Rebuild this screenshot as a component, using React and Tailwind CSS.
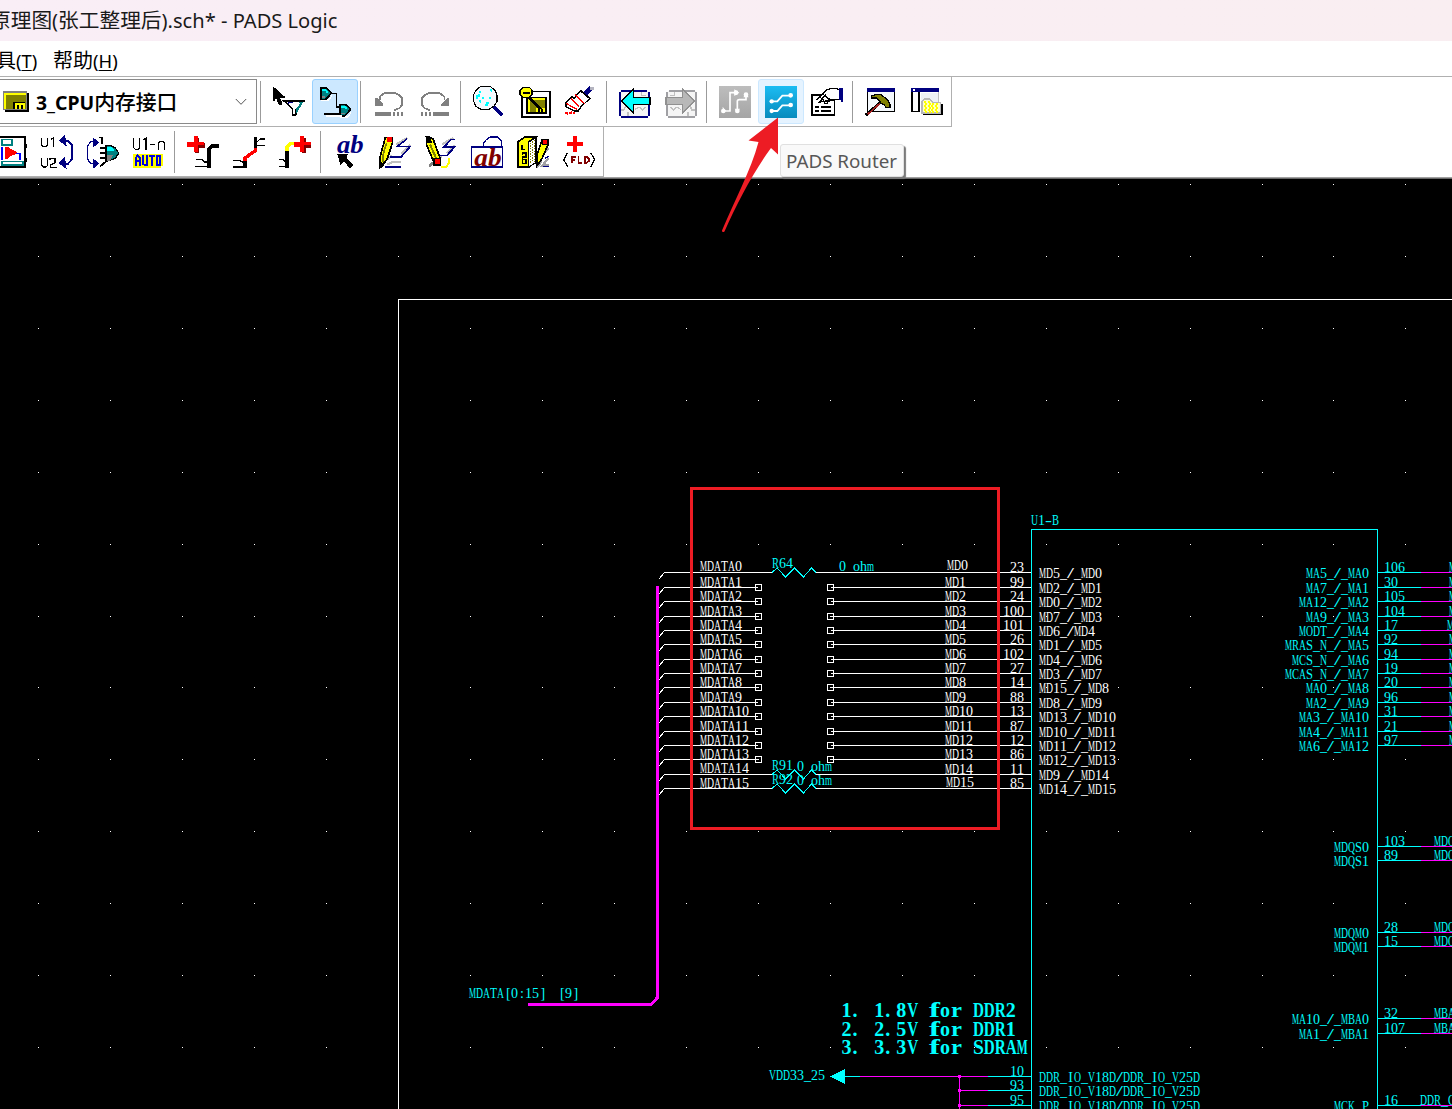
import React from "react";

const CYAN = "#00ffff";
const MAGENTA = "#ff00ff";
const NAVY = "#000080";

/* ---------- toolbar parts ---------- */

function Button({ box, tone = "border-transparent", children }) {
  return (
    <div className={"relative h-[45px] w-[46px] shrink-0 rounded-[3px] border " + tone}>
      <svg className="absolute -left-px -top-px h-[45px] w-[46px]" viewBox={box} shapeRendering="crispEdges" fill="none">
        {children}
      </svg>
    </div>
  );
}

function Separator() {
  return <div className="ml-[2px] mr-[5px] h-[42px] w-px shrink-0 bg-[#9b9b9b]" />;
}

function Letters({ x, y, w, size, fill, children }) {
  return (
    <text x={x} y={y} fontSize={size} fill={fill} textLength={w} lengthAdjust="spacingAndGlyphs" fontFamily="Liberation Serif, serif" fontStyle="italic" fontWeight={700}>
      {children}
    </text>
  );
}

function FilterIcon() {
  return (
    <Button box="18 9 138 135">
      <path d="M39 31V76H45V70H51V76L57 86H66V76L60 66H75V61L69 60L45 36Z" fill="#000" />
      <path d="M72 75H132L108 98V115H98V98Z" fill="#fff" stroke="#000" strokeWidth="4" />
      <path d="M108 98V115L132 75H120Z" fill="#008080" />
      <path d="M84 78h15v5h-15z" fill={NAVY} />
      <path d="M84 83L101 98H109L122 80H102Z" fill="#fff" />
      <path d="M69 74H135M97 97V118H109" stroke="#000" strokeWidth="5" />
    </Button>
  );
}

function Gate({ x, y }) {
  return (
    <g transform={`translate(${x} ${y})`}>
      <path d="M3 36H27L36 20V28L26 42H3Z" fill="#fff" />
      <path d="M2 2H18L26 8L33 17L26 27L17 36H2Z" fill="#008080" stroke="#000" strokeWidth="5" />
      <path d="M6 6H17L24 13V17H18V12H6Z" fill={CYAN} />
      <path d="M6 29H16" stroke="#808080" strokeWidth="5" />
    </g>
  );
}

function GatesIcon() {
  return (
    <Button box="156 9 138 135" tone="bg-[#cce8ff] border-[#99d1ff]">
      <Gate x={180} y={34} />
      <Gate x={238} y={83} />
      <path d="M214 52H229V92H238M192 114H242" stroke="#000" strokeWidth="5" />
      <path d="M198 120H245" stroke="#fff" strokeWidth="5" />
    </Button>
  );
}

function Undo({ flip }) {
  return (
    <Button box={flip ? "456 9 138 135" : "318 9 138 135"}>
      <g transform={flip ? "translate(912 0) scale(-1 1)" : undefined} fill="#808080">
        <path d="M345 66H351L360 75L369 84V90H345Z" />
        <path d="M359 72V63L369 54L378 50H402L417 57L426 66V87L417 97L402 103" fill="none" stroke="#808080" strokeWidth="5" />
        <path d="M345 108h48v12h-48zM399 108h5v12h-5zM411 108h5v12h-5zM423 108h6v12h-6z" />
      </g>
    </Button>
  );
}

function ZoomIcon() {
  return (
    <Button box="618 9 138 135">
      <path d="M663 31H690L705 43L711 57V76L702 90L687 100H663L648 91L641 76V56L649 41Z" fill="#f5fafe" stroke="#000" strokeWidth="3.5" />
      <path d="M651 68V60H656V55M659 50V46H663M689 42H694V48M668 62V68M674 86H680V80H686M690 70V64M656 74H661V80" stroke={CYAN} strokeWidth="5" />
      <path d="M702 93L727 117" stroke={NAVY} strokeWidth="10" />
    </Button>
  );
}

function BoardIcon() {
  return (
    <Button box="756 9 138 135">
      <path d="M786 46H870V122H786Z" fill="#fff" stroke="#000" strokeWidth="5" />
      <path d="M798 62H861V113H798Z" fill="#000" />
      <path d="M803 67H855V107H803Z" fill="#ffff00" />
      <path d="M809 72H855V107H809Z" fill="#808000" />
      <path d="M829 95h26v12h-26z" fill="#ffff00" />
      <path d="M834 99h5v8h-5zM844 99h5v8h-5z" fill="#000" />
      <path d="M806 62L842 100" stroke="#000" strokeWidth="9" />
      <path d="M791 34H808L816 42V57L807 65H790L780 56V42Z" fill="#ffff00" stroke="#000" strokeWidth="4" />
      <path d="M788 50H809" stroke="#000" strokeWidth="5" />
    </Button>
  );
}

function BrushIcon() {
  return (
    <Button box="894 9 138 135">
      <path d="M918 79L935 62L942 67L962 44L990 67L963 92L955 105H942L918 93Z" fill="#fff" stroke="#000" strokeWidth="4" />
      <path d="M934 67L957 92M946 56L974 83M918 82L952 101" stroke="#ff0000" strokeWidth="4" />
      <path d="M916 111H923V117M928 111H935V104M938 111H944" stroke="#ff0000" strokeWidth="4" />
      <path d="M972 57L993 36" stroke={NAVY} strokeWidth="15" />
      <path d="M990 33h12v10h-12z" fill="#b4b4c0" />
      <path d="M963 45L989 67" stroke="#000" strokeWidth="5" />
    </Button>
  );
}

function SheetArrow({ next }) {
  const frame = next ? "#a0a0a4" : NAVY;
  return (
    <Button box={next ? "174 9 138 135" : "36 9 138 135"}>
      <g transform={next ? "translate(348 0) scale(-1 1)" : undefined}>
        <path d="M60 44H145V123H60Z" fill="#f5f5f5" />
        <path d="M63 44H142M60 48V120M146 48V120M63 124H144" stroke={frame} strokeWidth="6" />
        <path d="M64 102H72L78 90M84 120V108M106 100L118 94L128 102L139 92M124 49V58H138" stroke="#c0c0c0" strokeWidth="4" />
        <path d="M65 75L101 39V64H150V86H101V111Z" fill={next ? "#b8b8b8" : CYAN} stroke={next ? "#909090" : "#000"} strokeWidth="4" />
      </g>
    </Button>
  );
}

function LayoutIcon() {
  return (
    <Button box="336 9 138 135">
      <defs>
        <linearGradient id="grayTile" x1="0" y1="0" x2="0" y2="1"><stop offset="0" stopColor="#bdbdbd" /><stop offset="1" stopColor="#a5a5a5" /></linearGradient>
      </defs>
      <rect x="357" y="30" width="96" height="96" rx="4" fill="url(#grayTile)" />
      <g shapeRendering="auto" stroke="#fff" strokeWidth="5">
        <path d="M370 105H390V50H408M412 105V76Q412 71 418 71H438V56" />
        <path d="M403 40V60L418 50ZM430 64H446L438 50ZM368 92V108L378 105ZM404 98H420L412 111Z" fill="#fff" stroke="none" />
        <circle cx="370" cy="105" r="7" fill="#fff" stroke="none" />
        <circle cx="408" cy="50" r="7" fill="#fff" stroke="none" />
        <circle cx="438" cy="56" r="7" fill="#fff" stroke="none" />
        <circle cx="412" cy="105" r="7" fill="#fff" stroke="none" />
      </g>
    </Button>
  );
}

function RouterIcon() {
  return (
    <Button box="474 9 138 135" tone="bg-[#e5f3ff] border-[#cce8ff]">
      <defs>
        <linearGradient id="blueTile" x1="0" y1="0" x2="0" y2="1"><stop offset="0" stopColor="#1cbcf2" /><stop offset="1" stopColor="#078bbd" /></linearGradient>
      </defs>
      <rect x="495" y="30" width="96" height="96" rx="3" fill="url(#blueTile)" />
      <g shapeRendering="auto" stroke="#fff" strokeWidth="5.5">
        <path d="M514 76H532L547 59H572M514 105H532L547 88H572" />
        <g fill="#fff" stroke="none">
          <circle cx="515" cy="76" r="6.5" /><circle cx="572" cy="58" r="7" /><circle cx="515" cy="105" r="6.5" /><circle cx="572" cy="87" r="7" />
        </g>
      </g>
    </Button>
  );
}

function PropertiesIcon() {
  return (
    <Button box="612 9 138 135">
      <path d="M635 56H703V117H635Z" fill="#fff" stroke="#000" strokeWidth="5" />
      <path d="M645 92H656M664 92H693M645 104H656M664 104H693" stroke="#000" strokeWidth="5" />
      <path d="M650 72L678 43L690 38H718V69H690L681 82H675L668 69L658 78Z" fill="#fff" />
      <path d="M650 72L678 43L690 38H712L720 44M716 70H690L681 82H675L668 69L658 78Z" stroke="#000" strokeWidth="4" />
      <path d="M660 62L672 76M668 52L690 76M676 60L690 70M664 70L678 56" stroke="#000" strokeWidth="3" />
      <path d="M717 36h12v42h-6v-6h-6z" fill={NAVY} />
    </Button>
  );
}

function HammerIcon() {
  return (
    <Button box="774 9 138 135">
      <path d="M803 39H884V106H803Z" fill="#f4f8fc" stroke="#000" strokeWidth="4" />
      <path d="M801 36h84v12h-84z" fill={NAVY} />
      <path d="M815 60L827 56H843L861 70L870 84V94H858L852 86L843 81L831 66H815Z" fill="#808000" stroke="#000" strokeWidth="4" />
      <path d="M797 118L842 79" stroke="#000" strokeWidth="9" />
      <path d="M803 115L839 83" stroke="#a02020" strokeWidth="5" />
    </Button>
  );
}

function ProjectIcon() {
  return (
    <Button box="912 9 138 135">
      <path d="M935 39H957V106H935Z" fill="#fff" stroke="#000" strokeWidth="5" />
      <path d="M962 50H1015V90H962Z" fill="#eef1f6" />
      <path d="M1015 48V84" stroke="#c0c0c0" strokeWidth="4" />
      <path d="M933 36h84v12h-84z" fill={NAVY} />
      <path d="M939 40h5v5h-5z" fill="#fff" />
      <path d="M969 118H1028V84H1022V112H969Z" fill="#000" />
      <path d="M966 76L973 69H990L998 80H1022V111H966Z" fill="#ffffc8" stroke="#b8b8b8" strokeWidth="4" />
      <path d="M972 78H990M975 84H1018M972 90H1018M975 96H1018M972 102H1018M975 107H1018" stroke="#ffff00" strokeWidth="5" strokeDasharray="6 5" />
    </Button>
  );
}

function Dropdown() {
  return (
    <div className="flex h-[45px] w-[257px] shrink-0 items-center border border-l-0 border-[#8a8a8a] bg-white">
      <svg className="ml-[3px] h-[22px] w-[26px] shrink-0" viewBox="9 276 78 66" shapeRendering="crispEdges">
        <path d="M15 282h72v57H15z" fill="#000" />
        <path d="M9 276h72v57H9z" fill="#808080" />
        <path d="M12 282h66v48H12z" fill="#ffff00" />
        <path d="M18 288h60v42H18z" fill="#808000" />
        <path d="M39 308h36v22H39z" fill="#000" />
        <path d="M45 312h30v18H45z" fill="#ffff00" />
        <path d="M51 318h5v12h-5zM63 318h5v12h-5z" fill="#000" />
      </svg>
      <span className="ml-[7px] whitespace-nowrap pt-[2px] font-['Noto_Sans','Noto_Sans_CJK_SC',sans-serif] text-[19.4px] font-bold leading-none">
        3_CPU<span className="text-[20.8px] font-medium">内存接口</span>
      </span>
      <svg className="ml-auto mr-[9px] h-[8px] w-[12px]" viewBox="0 0 12 8" fill="none" stroke="#555">
        <path d="M.8 1L6 6.3L11.2 1" />
      </svg>
    </div>
  );
}

/* ---------- second toolbar icons ---------- */

function PartIcon() {
  return (
    <Button box="-36 15 138 135">
      <path d="M-20 38H74V128H-20Z" fill="#fff" stroke="#000" strokeWidth="6" />
      <path d="M76 61h5v11h-5zM76 102h5v12h-5z" fill="#000" />
      <path d="M5 46H36V62H5Z" stroke="#008080" strokeWidth="5" />
      <path d="M5 112H68V122H5Z" stroke="#008080" strokeWidth="5" />
      <path d="M5 68V108M48 88H60V108" stroke="#0000ff" strokeWidth="5" />
      <path d="M16 68H24L30 75L42 79L52 86L42 93L30 97L24 104H16Z" fill="#ff0000" />
    </Button>
  );
}

function SwapRefIcon() {
  return (
    <Button box="102 15 138 135">
      <path d="M125 42V63L130 68H138L143 63V42M152 46L160 42V70M125 103V124L130 129H138L143 124V103M150 108V103H165V116L151 124V130H170" stroke="#000" strokeWidth="4" />
      <path d="M196 50H204L216 63V106L204 119H196" stroke={NAVY} strokeWidth="6" />
      <path d="M178 50L194 36L198 64ZM178 117L194 102L198 132Z" fill={NAVY} stroke={NAVY} strokeWidth="3" />
    </Button>
  );
}

function SwapPinIcon() {
  return (
    <Button box="240 15 138 135">
      <path d="M280 53H272L263 66V105L272 119H280" stroke={NAVY} strokeWidth="4" />
      <path d="M296 56L280 43V68ZM296 119L280 106V132Z" fill={NAVY} stroke={NAVY} strokeWidth="3" />
      <path d="M298 40H305V60M300 72H318M300 86H318M300 101H318M301 127L318 112" stroke="#000" strokeWidth="5" />
      <path d="M318 65H333L346 72L356 87L346 103L318 112Z" fill="#008080" stroke="#000" strokeWidth="4" />
      <path d="M321 68H335L345 82H321Z" fill={CYAN} />
      <path d="M321 94H338L330 110H321Z" fill="#808080" />
    </Button>
  );
}

function AutoIcon() {
  return (
    <Button box="378 15 138 135">
      <path d="M401 42V71L406 76H414L419 71V42M430 48L438 42V77M449 61H465M475 77V55M475 58L480 52H488L493 58V77" stroke="#000" strokeWidth="4" />
      <path d="M400 90h90v36h-6v6h-84z" fill="#ffff00" />
      <path d="M407 127V103L413 94L420 103V127M407 112H421M430 94V120L435 124H442V94M448 95H464M456 95V127M470 96H481V124H470Z" stroke="#0000e0" strokeWidth="6" />
    </Button>
  );
}

function RedPlus({ x, y }) {
  return (
    <g transform={`translate(${x} ${y})`}>
      <path d="M24 4h12v15h16v16h-16v14h-12z" fill="#800000" />
      <path d="M19 0h12v17h20v10h-20v19h-12v-15h-19v-14h19z" fill="#ff0000" />
    </g>
  );
}

function AddNetIcon() {
  return (
    <Button box="540 15 138 135">
      <RedPlus x={562} y={37} />
      <path d="M656 66H636L627 76V131" stroke="#000" strokeWidth="10" />
      <path d="M587 106H606L613 114H622M584 128H624" stroke="#000" strokeWidth="4" />
    </Button>
  );
}

function AddLinkIcon() {
  return (
    <Button box="678 15 138 135">
      <path d="M766 38V72M735 108V131" stroke="#000" strokeWidth="11" />
      <path d="M766 72V80L735 102V110" stroke="#ff0000" strokeWidth="10" />
      <path d="M771 54L780 45H795M771 64H795M700 110H720L733 118M699 129H733" stroke="#000" strokeWidth="4" />
    </Button>
  );
}

function AddBusIcon() {
  return (
    <Button box="816 15 138 135">
      <path d="M861 82V131" stroke="#000" strokeWidth="11" />
      <path d="M861 82V69L870 59H888" stroke="#ffff00" strokeWidth="10" />
      <RedPlus x={881} y={37} />
      <path d="M838 106H849L857 114M837 128H857" stroke="#000" strokeWidth="4" />
    </Button>
  );
}

function TextCursorIcon() {
  return (
    <Button box="198 159 138 135">
      <Letters x={231} y={232} w={80} size={74} fill={NAVY}>ab</Letters>
      <path d="M232 234H264L259 246L279 267L270 277L252 257L241 266Z" fill="#000" />
    </Button>
  );
}

function PencilIcon() {
  return (
    <Button box="336 159 138 135">
      <path d="M443 186L408 205M451 207L425 234M382 252L396 238M382 266L396 258H424" stroke="#c0c0c0" strokeWidth="7" />
      <path d="M441 189L412 211H451L424 242H391M422 272H376" stroke={NAVY} strokeWidth="5" />
      <path d="M376 184H397V202L381 251L360 274V244Z" fill="#ffff00" stroke="#000" strokeWidth="5" />
      <path d="M380 200L368 240V258" stroke="#808000" strokeWidth="5" />
      <path d="M382 183h15v15h-15z" fill="#ff0000" />
      <path d="M359 255v20h8l7-8z" fill="#000" />
    </Button>
  );
}

function EraseIcon() {
  return (
    <Button box="474 159 138 135">
      <path d="M580 186L546 205M584 207L560 232M545 242H531" stroke="#c0c0c0" strokeWidth="7" />
      <path d="M584 190H574L552 213H584L561 238H540" stroke={NAVY} strokeWidth="5" />
      <path d="M508 271L524 256" stroke="#808080" strokeWidth="8" />
      <path d="M499 182L519 188L540 246L521 256L500 208Z" fill="#ffff00" stroke="#000" strokeWidth="5" />
      <path d="M510 205L529 248" stroke="#808000" strokeWidth="6" />
      <path d="M498 180h11l8 20h-19z" fill="#000" />
      <path d="M522 248h20v19h-20z" fill="#ff0000" stroke="#000" strokeWidth="4" />
      <path d="M544 273H558L566 262V247" stroke="#ffff00" strokeWidth="6" />
    </Button>
  );
}

function BagIcon() {
  return (
    <Button box="612 159 138 135">
      <path d="M635 213H728V273H635Z" fill="#fff" stroke={NAVY} strokeWidth="4" />
      <path d="M670 211V201L680 190L692 183H712L724 194V211" stroke={NAVY} strokeWidth="4" />
      <Letters x={643} y={271} w={82} size={74} fill="#800000">ab</Letters>
    </Button>
  );
}

function LibraryIcon() {
  return (
    <Button box="750 159 138 135">
      <path d="M774 197L797 182H828L806 198V273H774Z" fill="#ffff00" stroke="#000" strokeWidth="5" />
      <path d="M806 198L828 183V260L806 273Z" fill="#fff" stroke="#000" strokeWidth="4" />
      <path d="M812 200V265M818 196V262M824 192V258" stroke="#808000" strokeWidth="3" strokeDasharray="4 4" />
      <path d="M786 207V220H795M787 238V231H798V243H787V262M787 250H798V262H787" stroke="#000" strokeWidth="4" />
      <path d="M866 218L842 242V260L830 273M866 245L848 268H866" stroke="#a0a0a4" strokeWidth="7" />
      <path d="M866 240L855 248M850 272H866" stroke={NAVY} strokeWidth="4" />
      <path d="M846 191H863V209L845 250L830 270V240Z" fill="#ffff00" stroke="#000" strokeWidth="5" />
      <path d="M848 190h15v15h-15z" fill="#ff0000" stroke="#000" strokeWidth="3" />
    </Button>
  );
}

function FieldIcon() {
  return (
    <Button box="888 159 138 135">
      <path d="M939 180h12v18h18v12h-18v18h-12v-18h-18v-12h18z" fill="#ff0000" />
      <path d="M923 230L911 251L923 272M992 230L1004 251L992 272" stroke="#000" strokeWidth="4" />
      <path d="M935 262V243H948M935 251H945M955 241V260H967M974 243H981L987 249V255L981 260H974Z" stroke="#800000" strokeWidth="5" />
    </Button>
  );
}

/* ---------- schematic ---------- */

// Glyphs kept at their natural width inside a fixed-pitch cell: [width in em, offset in cell].
const THIN = {
  ".": [0.25, 0], ":": [0.278, 0.3], "[": [0.333, 0.3], "]": [0.333, 0.2], " ": [0.25, 0], I: [0.333, 0.17],
};
const NATURAL = /[0-9_ohm]/;

function Label({ x, y, children, fill = "#fff", end = false, pitch = 7, size = 14, bold = false }) {
  const chars = [...children];
  const left = end ? x - chars.length * pitch : x;
  return (
    <text y={y} fontSize={size} fill={fill} fontWeight={bold ? 700 : 400} fontFamily="Liberation Serif, serif" style={{ whiteSpace: "pre" }}>
      {chars.map((c, i) => {
        const thin = THIN[c];
        const at = left + i * pitch + (thin ? pitch * thin[1] : 0);
        const natural = thin || (c !== "m" && NATURAL.test(c));
        return natural ? (
          <tspan key={i} x={at}>{c}</tspan>
        ) : (
          <tspan key={i} x={at} textLength={pitch} lengthAdjust="spacingAndGlyphs">{c}</tspan>
        );
      })}
    </text>
  );
}

const ROWS = [572, 587, 601, 616, 630, 644, 659, 673, 687, 702, 716, 731, 745, 759, 774, 788];
const LEFT_PINS = [
  ["23", "MD5_/_MD0"], ["99", "MD2_/_MD1"], ["24", "MD0_/_MD2"], ["100", "MD7_/_MD3"],
  ["101", "MD6_/MD4"], ["26", "MD1_/_MD5"], ["102", "MD4_/_MD6"], ["27", "MD3_/_MD7"],
  ["14", "MD15_/_MD8"], ["88", "MD8_/_MD9"], ["13", "MD13_/_MD10"], ["87", "MD10_/_MD11"],
  ["12", "MD11_/_MD12"], ["86", "MD12_/_MD13"], ["11", "MD9_/_MD14"], ["85", "MD14_/_MD15"],
];
const RIGHT_PINS = [
  [572, "106", "MA5_/_MA0", "M", 1449], [587, "30", "MA7_/_MA1", "M", 1449], [601, "105", "MA12_/_MA2", "M", 1449],
  [616, "104", "MA9_/_MA3", "M", 1449], [630, "17", "MODT_/_MA4", "M", 1447], [644, "92", "MRAS_N_/_MA5", "M", 1449],
  [659, "94", "MCS_N_/_MA6", "M", 1449], [673, "19", "MCAS_N_/_MA7", "M", 1449], [687, "20", "MA0_/_MA8", "M", 1449],
  [702, "96", "MA2_/_MA9", "M", 1449], [716, "31", "MA3_/_MA10", "M", 1449], [731, "21", "MA4_/_MA11", "M", 1449],
  [745, "97", "MA6_/_MA12", "M", 1449], [846, "103", "MDQS0", "MDQ", 1434], [860, "89", "MDQS1", "MDQ", 1434],
  [932, "28", "MDQM0", "MDQ", 1434], [946, "15", "MDQM1", "MDQ", 1434], [1018, "32", "MA10_/_MBA0", "MBA", 1434],
  [1033, "107", "MA1_/_MBA1", "MBA", 1434], [1105, "16", "MCK_P", "DDR_C", 1420],
];
const GRID_X = [38, 110, 182, 254, 326, 398, 470, 542, 614, 686, 758, 830, 902, 974, 1046, 1118, 1190, 1262, 1333, 1405];
const GRID_Y = [184, 256, 328, 400, 472, 544, 616, 687, 759, 831, 903, 975, 1047];

function Resistor({ y }) {
  return <path d={`M772 ${y + 0.5}L777 ${y - 4}L785.5 ${y + 5}L794.5 ${y - 4}L803.5 ${y + 5}L811.5 ${y - 4}L816 ${y + 0.5}`} stroke={CYAN} fill="none" />;
}

function DataRow({ i, y }) {
  const m = y + 0.5;
  const wired = i === 0 || i > 13;
  const netY = i === 0 ? 571 : i === 14 ? 773 : y;
  const mdY = i === 0 ? 570 : i === 15 ? 787 : y;
  const mdX = i === 0 ? 947 : i === 15 ? 946 : 945;
  return (
    <g>
      <path d={`M658.5 ${m + 7}L664.5 ${m}H${wired ? 772 : 758}M${wired ? 816 : 831} ${m}H1031`} stroke="#fff" fill="none" />
      {wired ? <Resistor y={y} /> : <path d={`M755.5 ${m - 3}h6v6h-6zM827.5 ${m - 3}h6v6h-6z`} stroke="#fff" fill="none" />}
      <Label x={700} y={netY}>{"MDATA" + i}</Label>
      <Label x={mdX} y={mdY}>{"MD" + i}</Label>
      <Label x={1024} y={y} end>{LEFT_PINS[i][0]}</Label>
      <Label x={1039} y={y + 6}>{LEFT_PINS[i][1]}</Label>
    </g>
  );
}

function Schematic() {
  return (
    <svg className="block h-[930px] w-[1452px] bg-black" viewBox="0 179 1452 930" shapeRendering="crispEdges" fill="none">
      {GRID_Y.map((y) => GRID_X.map((x) => <rect key={x + "-" + y} x={x} y={y} width="1" height="1" fill="#fff" />))}
      <path d="M1452 299.5H398.5V1109" stroke="#fff" />

      <path d="M657.5 586V997.5L651 1004.5H528" stroke={MAGENTA} strokeWidth="3" />
      <Label x={469} y={998} fill={CYAN}>MDATA[0:15]</Label>
      <Label x={558} y={998} fill={CYAN}>[9]</Label>

      <path d="M1031.5 1109V529.5H1377.5V1109" stroke={CYAN} />
      <Label x={1031} y={525} fill={CYAN}>U1-B</Label>

      {ROWS.map((y, i) => <DataRow key={y} i={i} y={y} />)}
      <Label x={772} y={568} fill={CYAN}>R64</Label>
      <Label x={839} y={571} fill={CYAN}>0 ohm</Label>
      <Label x={772} y={770} fill={CYAN}>R91</Label>
      <Label x={797} y={771} fill={CYAN}>0 ohm</Label>
      <Label x={772} y={784} fill={CYAN}>R92</Label>
      <Label x={797} y={785} fill={CYAN}>0 ohm</Label>

      {RIGHT_PINS.map(([y, pin, name, net, netX]) => (
        <g key={y}>
          <path d={`M1378 ${y + 0.5}H1421`} stroke={CYAN} />
          <path d={`M1421 ${y + 0.5}H1452`} stroke={MAGENTA} />
          <Label x={1384} y={y} fill={CYAN}>{pin}</Label>
          <Label x={1369} y={y + 6} fill={CYAN} end>{name}</Label>
          <Label x={netX} y={y} fill={CYAN}>{net}</Label>
        </g>
      ))}

      <Label x={841.5} y={1017} fill={CYAN} pitch={10.95} size={20} bold>1. 1.8V for DDR2</Label>
      <Label x={841.5} y={1036} fill={CYAN} pitch={10.95} size={20} bold>2. 2.5V for DDR1</Label>
      <Label x={841.5} y={1054} fill={CYAN} pitch={10.95} size={20} bold>3. 3.3V for SDRAM</Label>

      <Label x={769} y={1080} fill={CYAN}>VDD33_25</Label>
      <path d="M830 1076.5L845 1069V1084Z" fill={CYAN} />
      <path d="M845 1076.5H860" stroke={CYAN} />
      <path d="M860 1076.5H988M959.5 1076V1109M959 1090.5H988M959 1105.5H988" stroke={MAGENTA} />
      <path d="M958 1075h3v3h-3zM958 1089h3v3h-3zM958 1104h3v3h-3z" fill={MAGENTA} />
      {[[1076, "10"], [1090, "93"], [1105, "95"]].map(([y, pin]) => (
        <g key={y}>
          <path d={`M988 ${y + 0.5}H1031`} stroke={CYAN} />
          <Label x={1024} y={y} fill={CYAN} end>{pin}</Label>
          <Label x={1039} y={y + 6} fill={CYAN}>DDR_IO_V18D/DDR_IO_V25D</Label>
        </g>
      ))}

      <rect x="691.5" y="488.5" width="307" height="340" stroke="#ed1c24" strokeWidth="3" />
    </svg>
  );
}

export default function App() {
  return (
    <div className="relative flex h-[1109px] w-[1452px] flex-col overflow-hidden bg-white font-['Noto_Sans','Noto_Sans_CJK_SC',sans-serif] text-black">
      <header className="flex h-[41px] shrink-0 items-center bg-linear-to-r from-[#f9eef6] to-[#f9eef1] text-[#1a1a1a]">
        <h1 className="-ml-[10px] whitespace-nowrap text-[20.1px] leading-none">
          <span className="text-[20.7px]">原理图</span>(<span className="text-[20.7px]">张工整理后</span>).sch* - PADS Logic
        </h1>
      </header>

      <nav className="flex h-[35px] shrink-0 items-center whitespace-nowrap pt-[4px] text-[18.4px] leading-none">
        <span className="-ml-[4px] w-[57px]"><span className="text-[20px]">具</span>(<u className="underline-offset-2">T</u>)</span>
        <span><span className="text-[20px]">帮助</span>(<u className="underline-offset-2">H</u>)</span>
      </nav>

      <div className="h-px shrink-0 bg-[#b0b0b0]" />
      <div className="flex h-[50px] w-[952px] shrink-0 items-center border-b border-r border-[#b0b0b0]">
        <Dropdown />
        <div className="ml-px flex items-center">
          <Separator />
          <FilterIcon /><GatesIcon />
          <Separator />
          <Undo /><Undo flip />
          <Separator />
          <ZoomIcon /><BoardIcon /><BrushIcon />
          <Separator />
          <SheetArrow /><SheetArrow next />
          <Separator />
          <LayoutIcon /><RouterIcon /><PropertiesIcon />
          <Separator />
          <HammerIcon /><ProjectIcon />
        </div>
      </div>

      <div className="flex h-[50px] w-[604px] shrink-0 items-center border-b border-r border-[#b0b0b0]">
        <div className="-ml-[12px] flex items-center">
          <PartIcon /><SwapRefIcon /><SwapPinIcon /><AutoIcon />
          <Separator />
          <AddNetIcon /><AddLinkIcon /><AddBusIcon />
          <Separator />
          <TextCursorIcon /><PencilIcon /><EraseIcon /><BagIcon /><LibraryIcon /><FieldIcon />
        </div>
      </div>

      <div className="h-[2px] shrink-0 border-t border-[#a0a0a0] bg-[#696969]" />
      <Schematic />

      <div className="absolute left-[780px] top-[144px] flex h-[33px] w-[124px] items-center rounded-[3px] border border-[#e0e0e0] bg-[#f9f9f9] pl-[5px] pt-[2px] text-[18.8px] leading-none text-[#575757] shadow-[2px_2px_1px_#7a7a7a]">
        PADS Router
      </div>
      <svg className="absolute left-[720px] top-[116px] h-[118px] w-[60px]" viewBox="720 116 60 118">
        <path d="M778 117.5L748.5 140.5L758.5 142C751 170 734 202 722 230.5Q722 233 724.5 231.5C737 203 754 171 771 148L778 154.5Z" fill="#ed1c24" />
      </svg>
    </div>
  );
}
